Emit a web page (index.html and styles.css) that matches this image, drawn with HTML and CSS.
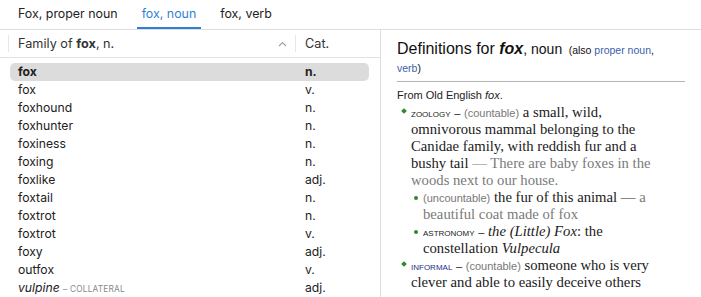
FILE: index.html
```html
<!DOCTYPE html>
<html>
<head>
<meta charset="utf-8">
<link rel="stylesheet" href="styles.css">
</head>
<body>
<div class="tabs">
  <div class="tab">Fox, proper noun</div>
  <div class="tab active">fox, noun</div>
  <div class="tab">fox, verb</div>
</div>
<div class="main">
  <div class="left">
    <div class="thead">
      <div class="th th-name">
        <span>Family of <b>fox</b>, n.</span>
        <svg class="caret" width="9" height="6" viewBox="0 0 9 6"><path d="M1 5 L4.5 1.5 L8 5" fill="none" stroke="#a0a0a0" stroke-width="1.1"/></svg>
      </div>
      <div class="th th-cat">Cat.</div>
    </div>
    <div class="rows">
      <div class="row sel"><span class="name">fox</span><span class="cat">n.</span></div>
      <div class="row"><span class="name">fox</span><span class="cat">v.</span></div>
      <div class="row"><span class="name">foxhound</span><span class="cat">n.</span></div>
      <div class="row"><span class="name">foxhunter</span><span class="cat">n.</span></div>
      <div class="row"><span class="name">foxiness</span><span class="cat">n.</span></div>
      <div class="row"><span class="name">foxing</span><span class="cat">n.</span></div>
      <div class="row"><span class="name">foxlike</span><span class="cat">adj.</span></div>
      <div class="row"><span class="name">foxtail</span><span class="cat">n.</span></div>
      <div class="row"><span class="name">foxtrot</span><span class="cat">n.</span></div>
      <div class="row"><span class="name">foxtrot</span><span class="cat">v.</span></div>
      <div class="row"><span class="name">foxy</span><span class="cat">adj.</span></div>
      <div class="row"><span class="name">outfox</span><span class="cat">v.</span></div>
      <div class="row"><span class="name"><i>vulpine</i> <span class="coll">– COLLATERAL</span></span><span class="cat">adj.</span></div>
    </div>
  </div>
  <div class="right">
    <h1 class="title">Definitions for <b><i>fox</i></b><span class="pos">, noun</span> <span class="also">(also <a class="lnk">proper noun</a>, <a class="lnk">verb</a>)</span></h1>
    <div class="rule"></div>
    <p class="ety">From Old English <i>fox</i>.</p>
    <ul class="defs">
      <li class="def">
        <div class="body"><span class="lab">ZOOLOGY</span> <span class="dash">–</span> <span class="gram">(countable)</span> a small, wild, omnivorous mammal belonging to the Canidae family, with reddish fur and a bushy tail <span class="ex">— There are baby foxes in the woods next to our house.</span>
          <ul class="subs">
            <li class="sub"><div class="body"><span class="gram">(uncountable)</span> the fur of this animal — <span class="ex">a beautiful coat made of fox</span></div></li>
            <li class="sub"><div class="body"><span class="lab">ASTRONOMY</span> <span class="dash">–</span> <i>the (Little) Fox</i>: the constellation <i>Vulpecula</i></div></li>
          </ul>
        </div>
      </li>
      <li class="def">
        <div class="body"><span class="lab blue">INFORMAL</span> <span class="dash">–</span> <span class="gram">(countable)</span> someone who is very clever and able to easily deceive others</div>
      </li>
    </ul>
  </div>
</div>
</body>
</html>
```
FILE: styles.css
```css
* { box-sizing: border-box; }
html, body { margin: 0; padding: 0; }
body {
  width: 701px;
  height: 297px;
  overflow: hidden;
  background: #fff;
  color: #222;
  font-family: Inter, Roboto, "Liberation Sans", sans-serif;
  font-size: 13px;
}
.tabs {
  display: flex;
  height: 30px;
  padding-left: 13px;
  gap: 14px;
  border-bottom: 1px solid #dedede;
}
.tab {
  padding: 0 5px;
  line-height: 28px;
  height: 29px;
  font-size: 12.4px;
  color: #222;
}
.tab.active {
  color: #2f7fd4;
  border-bottom: 2px solid #2f7fd4;
}
.main {
  display: flex;
  height: 267px;
}
.left {
  width: 381px;
  border-right: 1px solid #dedede;
  flex: none;
}
.thead {
  display: flex;
  align-items: center;
  height: 28px;
  padding-left: 8px;
  border-bottom: 1px solid #e2e2e2;
  color: #333;
  font-size: 12.7px;
}
.th {
  height: 17px;
  display: flex;
  align-items: center;
  border-left: 1px solid #e6e6e6;
}
.th-name {
  width: 287px;
  padding-left: 9px;
  padding-right: 8px;
  justify-content: space-between;
}
.th-cat {
  padding-left: 9px;
}
.rows {
  padding: 5px 11px 0 10px;
}
.row {
  display: flex;
  height: 18px;
  line-height: 18px;
  padding-left: 8px;
  font-size: 12.2px;
  border-radius: 5px;
}
.row.sel {
  background: #dcdcdc;
  font-weight: bold;
}
.name { width: 287px; flex: none; }
.coll { font-size: 8.3px; color: #888; letter-spacing: 0.2px; }
.right {
  flex: 1;
  padding: 10px 16px 0 16px;
  font-family: "Liberation Sans", Arial, sans-serif;
}
.title {
  margin: 0;
  padding-right: 10px;
  font-size: 16px;
  font-weight: normal;
  line-height: 18px;
  color: #111;
}
.pos { font-size: 14px; margin-right: 2px; line-height: 12px; }
.also { font-size: 10.5px; line-height: 12px; }
.lnk { color: #3b5fae; }
.rule {
  margin-top: 5px;
  border-top: 1px solid #b4b4b4;
}
.ety {
  margin: 7px 0 0 0;
  font-size: 11px;
  line-height: 12px;
}
.defs, .subs {
  list-style: none;
  margin: 0;
  padding: 0;
}
.defs { margin-top: 3px; padding-left: 4px; padding-right: 30px; }
.def, .sub {
  display: grid;
  grid-template-columns: 10px 1fr;
}
.def::before {
  content: "";
  width: 4px;
  height: 4px;
  margin-top: 5px;
  margin-left: 1px;
  background: #2f8a2a;
  transform: rotate(45deg);
}
.sub::before {
  content: "";
  width: 4px;
  height: 4px;
  margin-top: 7px;
  margin-left: 1px;
  background: #2f8a2a;
  border-radius: 50%;
}
.subs { margin: 0 0 0 2px; }
.body {
  font-family: "Liberation Serif", serif;
  font-size: 14.7px;
  line-height: 17px;
  color: #1a1a1a;
}
.lab, .dash, .gram { line-height: 12px; }
.lab {
  font-family: "Liberation Sans", Arial, sans-serif;
  font-size: 8px;
  color: #222;
}
.lab.blue { color: #27308a; }
.dash { font-family: "Liberation Sans", Arial, sans-serif; font-size: 11px; }
.gram {
  font-family: "Liberation Sans", Arial, sans-serif;
  font-size: 11px;
  color: #777;
}
.ex { color: #7a7a7a; }
```
